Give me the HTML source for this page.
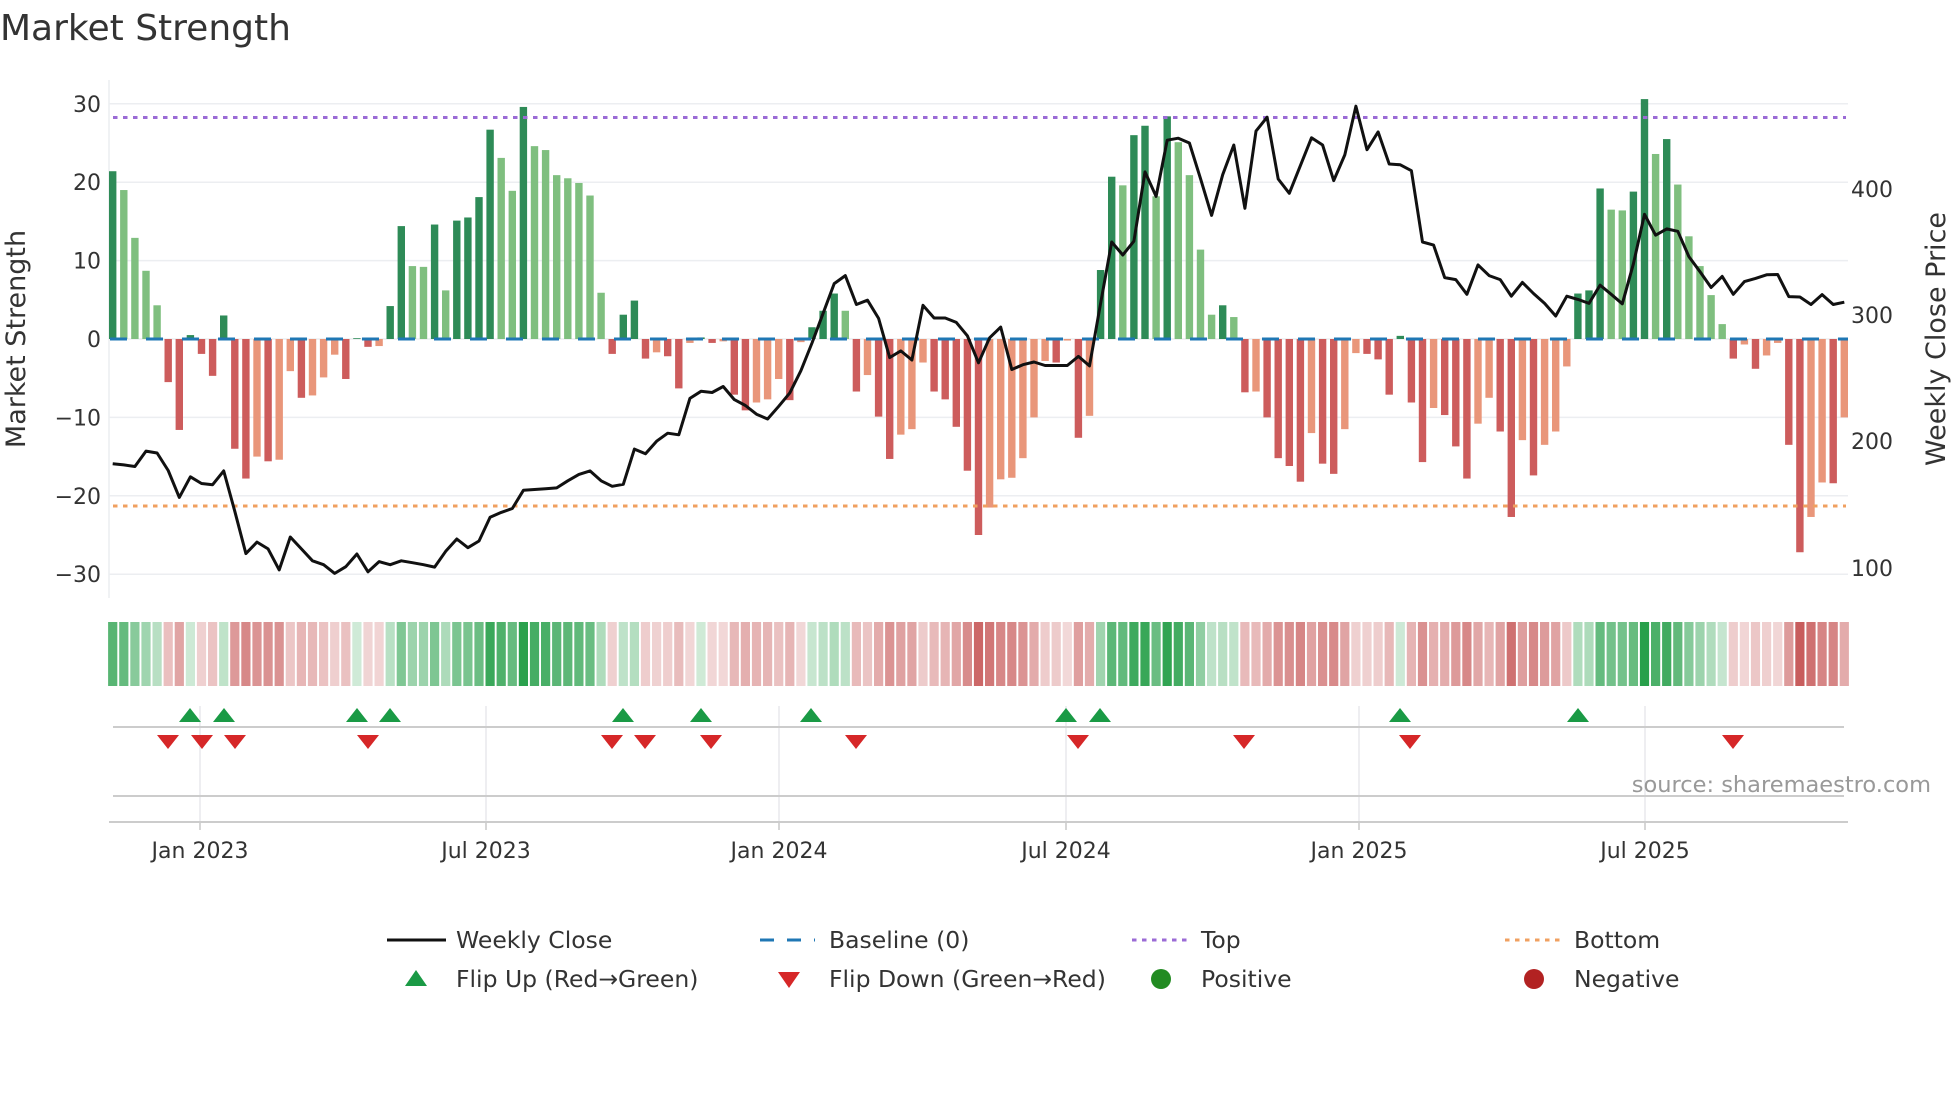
<!DOCTYPE html>
<html><head><meta charset="utf-8"><style>
html,body{margin:0;padding:0;background:#fff;width:1960px;height:1102px;overflow:hidden}
svg{display:block;font-family:"DejaVu Sans","Liberation Sans",sans-serif}
</style></head><body>
<svg id="s" width="1960" height="1102" viewBox="0 0 1960 1102" xmlns="http://www.w3.org/2000/svg"></svg>
<script>
var V=[21.4,19.0,12.9,8.7,4.3,-5.5,-11.6,0.5,-1.9,-4.7,3.0,-14.0,-17.8,-15.0,-15.6,-15.4,-4.1,-7.5,-7.2,-4.9,-2.0,-5.1,0.1,-1.0,-0.9,4.2,14.4,9.3,9.2,14.6,6.2,15.1,15.5,18.1,26.7,23.1,18.9,29.6,24.6,24.1,20.9,20.5,19.9,18.3,5.9,-1.9,3.1,4.9,-2.5,-1.7,-2.2,-6.3,-0.5,0.2,-0.5,-0.3,-7.1,-9.1,-8.1,-7.7,-5.1,-7.8,-0.4,1.5,3.6,5.8,3.6,-6.7,-4.6,-9.9,-15.3,-12.2,-11.5,-3.0,-6.7,-7.7,-11.2,-16.8,-25.0,-21.5,-17.9,-17.7,-15.2,-10.0,-2.8,-3.0,-0.2,-12.6,-9.8,8.8,20.7,19.6,26.0,27.2,18.2,28.4,25.1,20.9,11.4,3.1,4.3,2.8,-6.8,-6.7,-10.0,-15.2,-16.2,-18.2,-12.0,-15.9,-17.2,-11.5,-1.8,-1.9,-2.6,-7.1,0.4,-8.1,-15.7,-8.8,-9.7,-13.7,-17.8,-10.8,-7.5,-11.8,-22.7,-12.9,-17.4,-13.5,-11.8,-3.5,5.8,6.2,19.2,16.5,16.4,18.8,30.6,23.6,25.5,19.7,13.1,9.3,5.6,1.9,-2.5,-0.7,-3.8,-2.1,-0.5,-13.5,-27.2,-22.7,-18.3,-18.4,-10.0];
var L=[945,948,952,913,918,962,1030,978,995,998,963,1065,1172,1143,1160,1213,1130,1160,1190,1200,1222,1205,1173,1218,1192,1200,1190,1195,1200,1206,1166,1135,1157,1140,1080,1068,1058,1012,1010,1008,1006,988,972,963,988,1002,997,908,920,888,868,872,780,762,765,750,783,798,820,832,800,766,710,640,565,490,470,543,532,578,677,660,683,545,577,577,588,622,690,627,600,707,695,688,697,697,697,674,698,540,385,418,383,208,270,128,123,135,225,318,215,140,300,105,70,226,262,192,122,140,230,165,42,152,107,188,190,205,385,393,475,480,517,443,470,480,522,487,515,540,572,522,530,540,494,517,541,440,315,368,352,358,422,460,500,472,517,485,477,468,467,523,524,543,518,543,537];
var o='';
function X(i){return 112.7+11.1*i}
function Y(v){return 339-v*7.84}
o+='<text x="0" y="40" font-size="36" fill="#333">Market Strength</text>';
[30,20,10,0,-10,-20,-30].forEach(function(t){o+='<line x1="109" x2="1848" y1="'+Y(t)+'" y2="'+Y(t)+'" stroke="#eceef1" stroke-width="1.5"/>';
o+='<text x="101" y="'+(Y(t)+8)+'" font-size="22" fill="#333" text-anchor="end">'+(t<0?'\u2212'+(-t):t)+'</text>';});
o+='<line x1="109" x2="109" y1="80" y2="598" stroke="#eceef1" stroke-width="1.5"/>';
[[400,189],[300,315],[200,441],[100,568]].forEach(function(p){o+='<text x="1851" y="'+(p[1]+8)+'" font-size="22" fill="#333">'+p[0]+'</text>';});
o+='<text transform="translate(25,339) rotate(-90)" font-size="27" fill="#333" text-anchor="middle">Market Strength</text>';
o+='<text transform="translate(1945,339) rotate(-90)" font-size="27" fill="#333" text-anchor="middle">Weekly Close Price</text>';
for(var i=0;i<V.length;i++){var v=V[i],p=i?V[i-1]:0,c;
 if(v>=0)c=(v>=p)?'#2e8b57':'#7fbf7f';else c=(v<=p)?'#cd5c5c':'#e9967a';
 var y1=Y(Math.max(v,0)),h=Math.abs(v)*7.84;o+='<rect x="'+(X(i)-3.7)+'" y="'+y1+'" width="7.4" height="'+Math.max(h,0.8)+'" fill="'+c+'"/>';}
o+='<line x1="113" x2="1846" y1="117.5" y2="117.5" stroke="#9b6bd6" stroke-width="3" stroke-dasharray="4.5 5.5"/>';
o+='<line x1="113" x2="1846" y1="506" y2="506" stroke="#f0a060" stroke-width="3" stroke-dasharray="4.5 5.5"/>';
o+='<line x1="110" x2="1848" y1="339" y2="339" stroke="#1f77b4" stroke-width="3" stroke-dasharray="17 19"/>';
var d='';for(i=0;i<L.length;i++){d+=(i?'L':'M')+X(i).toFixed(1)+' '+(339-(630-L[i])*0.396).toFixed(1);}
o+='<path d="'+d+'" fill="none" stroke="#111" stroke-width="3" stroke-linejoin="round"/>';
function mix(a,b,t){return 'rgb('+[0,1,2].map(function(k){return Math.round(a[k]+(b[k]-a[k])*t)}).join(',')+')'}
for(i=0;i<V.length;i++){var v=V[i],t=0.22+0.78*Math.min(Math.abs(v)/30,1);
 var c=v>=0?mix([255,255,255],[40,160,75],t):mix([255,255,255],[196,80,80],t);
 o+='<rect x="'+(X(i)-4.6)+'" y="622" width="9.2" height="64" fill="'+c+'"/>';}
[200,486,779,1066,1359,1645].forEach(function(x){o+='<line x1="'+x+'" x2="'+x+'" y1="706" y2="830" stroke="#e8e8ec" stroke-width="1.5"/>';});
o+='<line x1="113" x2="1844" y1="727" y2="727" stroke="#ccc" stroke-width="2"/>';
o+='<line x1="113" x2="1844" y1="796" y2="796" stroke="#ccc" stroke-width="2"/>';
o+='<line x1="109" x2="1848" y1="822" y2="822" stroke="#ccc" stroke-width="2"/>';
[[200,'Jan 2023'],[486,'Jul 2023'],[779,'Jan 2024'],[1066,'Jul 2024'],[1359,'Jan 2025'],[1645,'Jul 2025']].forEach(function(a){
 o+='<line x1="'+a[0]+'" x2="'+a[0]+'" y1="822" y2="830" stroke="#ccc" stroke-width="1.5"/>';
 o+='<text x="'+a[0]+'" y="858" font-size="22" fill="#333" text-anchor="middle">'+a[1]+'</text>';});
[190,224,357,390,623,701,811,1066,1100,1400,1578].forEach(function(x){o+='<path d="M'+(x-11)+' 722 L'+(x+11)+' 722 L'+x+' 708 Z" fill="#1a9a45"/>';});
[168,202,235,368,612,645,711,856,1078,1244,1410,1733].forEach(function(x){o+='<path d="M'+(x-11)+' 735 L'+(x+11)+' 735 L'+x+' 749 Z" fill="#d62728"/>';});
o+='<text x="1931" y="792" font-size="22.5" fill="#999" text-anchor="end">source: sharemaestro.com</text>';
var ly1=940,ly2=979,fs=23.5;
o+='<line x1="387" x2="446" y1="'+ly1+'" y2="'+ly1+'" stroke="#111" stroke-width="3"/>';
o+='<text x="456" y="'+(ly1+8)+'" font-size="'+fs+'" fill="#333">Weekly Close</text>';
o+='<line x1="760" x2="815" y1="'+ly1+'" y2="'+ly1+'" stroke="#1f77b4" stroke-width="3" stroke-dasharray="14 13"/>';
o+='<text x="829" y="'+(ly1+8)+'" font-size="'+fs+'" fill="#333">Baseline (0)</text>';
o+='<line x1="1132" x2="1187" y1="'+ly1+'" y2="'+ly1+'" stroke="#9b6bd6" stroke-width="3" stroke-dasharray="4.5 5.5"/>';
o+='<text x="1201" y="'+(ly1+8)+'" font-size="'+fs+'" fill="#333">Top</text>';
o+='<line x1="1505" x2="1560" y1="'+ly1+'" y2="'+ly1+'" stroke="#f0a060" stroke-width="3" stroke-dasharray="4.5 5.5"/>';
o+='<text x="1574" y="'+(ly1+8)+'" font-size="'+fs+'" fill="#333">Bottom</text>';
o+='<path d="M405 986 L427 986 L416 970 Z" fill="#1a9a45"/>';
o+='<text x="456" y="'+(ly2+8)+'" font-size="'+fs+'" fill="#333">Flip Up (Red\u2192Green)</text>';
o+='<path d="M778 972 L800 972 L789 988 Z" fill="#d62728"/>';
o+='<text x="829" y="'+(ly2+8)+'" font-size="'+fs+'" fill="#333">Flip Down (Green\u2192Red)</text>';
o+='<circle cx="1161" cy="'+ly2+'" r="10" fill="#228b22"/>';
o+='<text x="1201" y="'+(ly2+8)+'" font-size="'+fs+'" fill="#333">Positive</text>';
o+='<circle cx="1534" cy="'+ly2+'" r="10" fill="#b22222"/>';
o+='<text x="1574" y="'+(ly2+8)+'" font-size="'+fs+'" fill="#333">Negative</text>';
document.getElementById('s').innerHTML=o;
</script>
</body></html>
